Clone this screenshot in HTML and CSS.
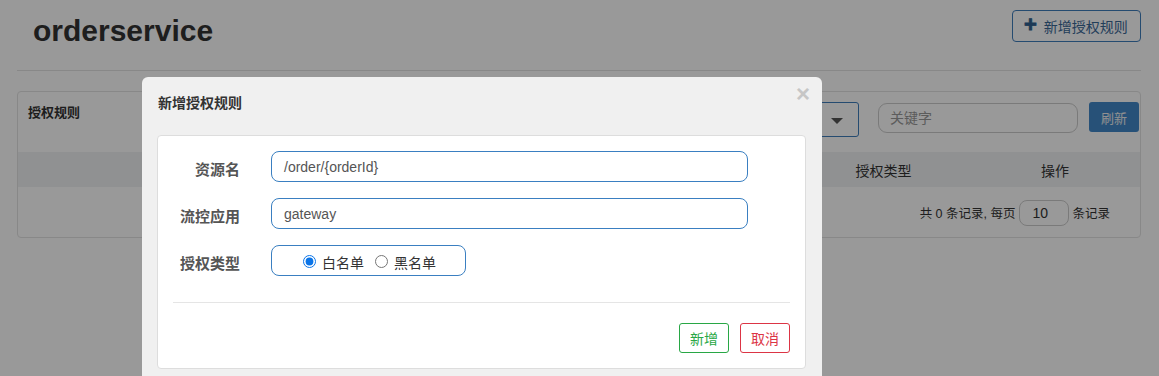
FILE: index.html
```html
<!DOCTYPE html>
<html lang="zh">
<head>
<meta charset="utf-8">
<title>orderservice</title>
<link rel="stylesheet" href="styles.css">
</head>
<body>
<div class="page">
  <header class="page-header">
    <h1 class="title">orderservice</h1>
    <button class="btn-outline-blue"><span class="plus">+</span>新增授权规则</button>
  </header>

  <section class="panel">
    <div class="panel-top">
      <div class="panel-title">授权规则</div>
      <div class="tools">
        <div class="select"><span class="caret"></span></div>
        <div class="search">关键字</div>
        <button class="btn-refresh">刷新</button>
      </div>
    </div>
    <div class="table-head">
      <div class="th th-type">授权类型</div>
      <div class="th th-op">操作</div>
    </div>
    <div class="pager">
      <span>共 0 条记录, 每页</span>
      <span class="page-size">10</span>
      <span>条记录</span>
    </div>
  </section>
</div>

<div class="backdrop"></div>

<div class="modal">
  <div class="modal-header">
    <div class="modal-title">新增授权规则</div>
    <span class="close">×</span>
  </div>
  <div class="modal-card">
    <div class="form-row">
      <label class="form-label">资源名</label>
      <div class="field">/order/{orderId}</div>
    </div>
    <div class="form-row">
      <label class="form-label">流控应用</label>
      <div class="field">gateway</div>
    </div>
    <div class="form-row">
      <label class="form-label">授权类型</label>
      <div class="radio-box">
        <label class="radio"><input type="radio" name="t" checked>白名单</label>
        <label class="radio"><input type="radio" name="t">黑名单</label>
      </div>
    </div>
    <div class="divider"></div>
    <div class="actions">
      <button class="btn btn-green">新增</button>
      <button class="btn btn-red">取消</button>
    </div>
  </div>
</div>
</body>
</html>
```

FILE: styles.css
```css
* { box-sizing: border-box; }
html, body { margin: 0; padding: 0; }
body {
  background: #fff;
  font-family: "Liberation Sans", "Noto Sans CJK SC", sans-serif;
  color: #333;
  width: 1159px;
  height: 376px;
  overflow: hidden;
}
.page { padding: 0 18px 0 17px; }

.page-header {
  height: 71px;
  border-bottom: 1px solid #e3e3e3;
  display: flex;
  justify-content: space-between;
  align-items: flex-start;
  padding-left: 16px;
}
.title {
  margin: 0;
  margin-top: 13px;
  font-size: 30px;
  line-height: 36px;
  font-weight: bold;
  color: #333;
}
.btn-outline-blue {
  margin-top: 10px;
  height: 32px;
  width: 129px;
  border: 1px solid #3f7dbb;
  border-radius: 4px;
  background: transparent;
  font-family: inherit;
  font-size: 14px;
  display: flex;
  align-items: center;
  padding: 0 0 0 11px;
  color: #3a6897;
}
.plus {
  font-weight: 900;
  font-size: 22px;
  line-height: 20px;
  margin-right: 7px;
  margin-top: -2px;
  color: #2f5f90;
  -webkit-text-stroke: 0.8px #2f5f90;
}

.panel {
  margin-top: 20px;
  height: 147px;
  border: 1px solid #e3e3e3;
  border-radius: 4px;
}
.panel-top {
  height: 60px;
  display: flex;
  justify-content: space-between;
  align-items: flex-start;
  padding: 9px 1px 0 10px;
}
.panel-title {
  font-size: 13px;
  font-weight: bold;
  color: #333;
  margin-top: 1px;
}
.tools { display: flex; align-items: flex-start; }
.select {
  width: 200px;
  height: 35px;
  border: 1px solid #3f7dbb;
  border-radius: 3px;
  position: relative;
  margin-top: 1px;
}
.caret {
  position: absolute;
  right: 15px;
  top: 15px;
  border-left: 6px solid transparent;
  border-right: 6px solid transparent;
  border-top: 6px solid #555;
}
.search {
  margin-left: 19px;
  margin-top: 2px;
  width: 200px;
  height: 30px;
  border: 1px solid #ccc;
  border-radius: 9px;
  padding: 6px 11px;
  font-size: 14px;
  line-height: 16px;
  color: #999;
}
.btn-refresh {
  margin-left: 11px;
  margin-top: 1px;
  width: 50px;
  height: 30px;
  border: none;
  border-radius: 3px;
  background: #4188c9;
  color: #f0f0f0;
  font-family: inherit;
  font-size: 13px;
}
.table-head {
  height: 35px;
  background: #f0f2f3;
  display: flex;
  align-items: center;
  justify-content: flex-end;
  font-size: 14px;
  color: #333;
}
.th-type { width: 173px; text-align: center; }
.th-op { width: 170px; text-align: center; }

.pager {
  height: 50px;
  display: flex;
  align-items: center;
  justify-content: flex-end;
  padding-right: 30px;
  font-size: 12.5px;
  color: #333;
}
.page-size {
  width: 50px;
  height: 26px;
  border: 1px solid #ccc;
  border-radius: 8px;
  margin: 2px 3px 0 4px;
  font-size: 14px;
  line-height: 24px;
  padding-left: 12px;
}

.backdrop {
  position: fixed;
  inset: 0;
  background: rgba(0, 0, 0, 0.4);
}

.modal {
  position: absolute;
  left: 142px;
  top: 77px;
  width: 680px;
  height: 320px;
  background: #f0f0f0;
  border-radius: 6px 6px 0 0;
  padding: 0 16px 0 15px;
}
.modal-header {
  height: 58px;
  display: flex;
  justify-content: space-between;
  align-items: flex-start;
  padding-top: 17px;
  padding-left: 1px;
}
.modal-title {
  font-size: 14px;
  font-weight: bold;
  color: #333;
  line-height: 18px;
}
.close {
  font-size: 24px;
  font-weight: bold;
  color: #c6c6c6;
  line-height: 18px;
  margin-top: -9px;
  margin-right: -4px;
}
.modal-card {
  background: #fff;
  border: 1px solid #ddd;
  border-radius: 4px;
  height: 234px;
  padding: 15px 15px 0 15px;
}
.form-row {
  display: flex;
  align-items: center;
  height: 31px;
  margin-bottom: 16px;
}
.form-label {
  width: 67px;
  text-align: right;
  font-size: 15px;
  font-weight: bold;
  color: #555;
  padding-top: 3px;
  margin-right: 31px;
  white-space: nowrap;
}
.field {
  width: 477px;
  height: 31px;
  border: 1px solid #3a7fc1;
  border-radius: 8px;
  padding: 6px 12px;
  font-size: 14px;
  line-height: 18px;
  color: #555;
}
.radio-box {
  width: 195px;
  height: 31px;
  border: 1px solid #3a7fc1;
  border-radius: 8px;
  display: flex;
  align-items: center;
  padding-left: 31px;
  padding-top: 2px;
  font-size: 14px;
  color: #333;
}
.radio { display: flex; align-items: center; margin: 0 11px 0 0; }
.radio input {
  margin: 0 6px 0 0;
  width: 13px;
  height: 13px;
  accent-color: #0a74e8;
}
.divider {
  border-top: 1px solid #e5e5e5;
  margin-top: 26px;
}
.actions {
  display: flex;
  justify-content: flex-end;
  gap: 11px;
  margin-top: 20px;
}
.btn {
  width: 50px;
  height: 30px;
  background: #fff;
  border-radius: 3px;
  font-family: inherit;
  font-size: 14px;
  padding: 0;
}
.btn-green { border: 1px solid #28a745; color: #28a745; }
.btn-red { border: 1px solid #dc3545; color: #dc3545; }
```
